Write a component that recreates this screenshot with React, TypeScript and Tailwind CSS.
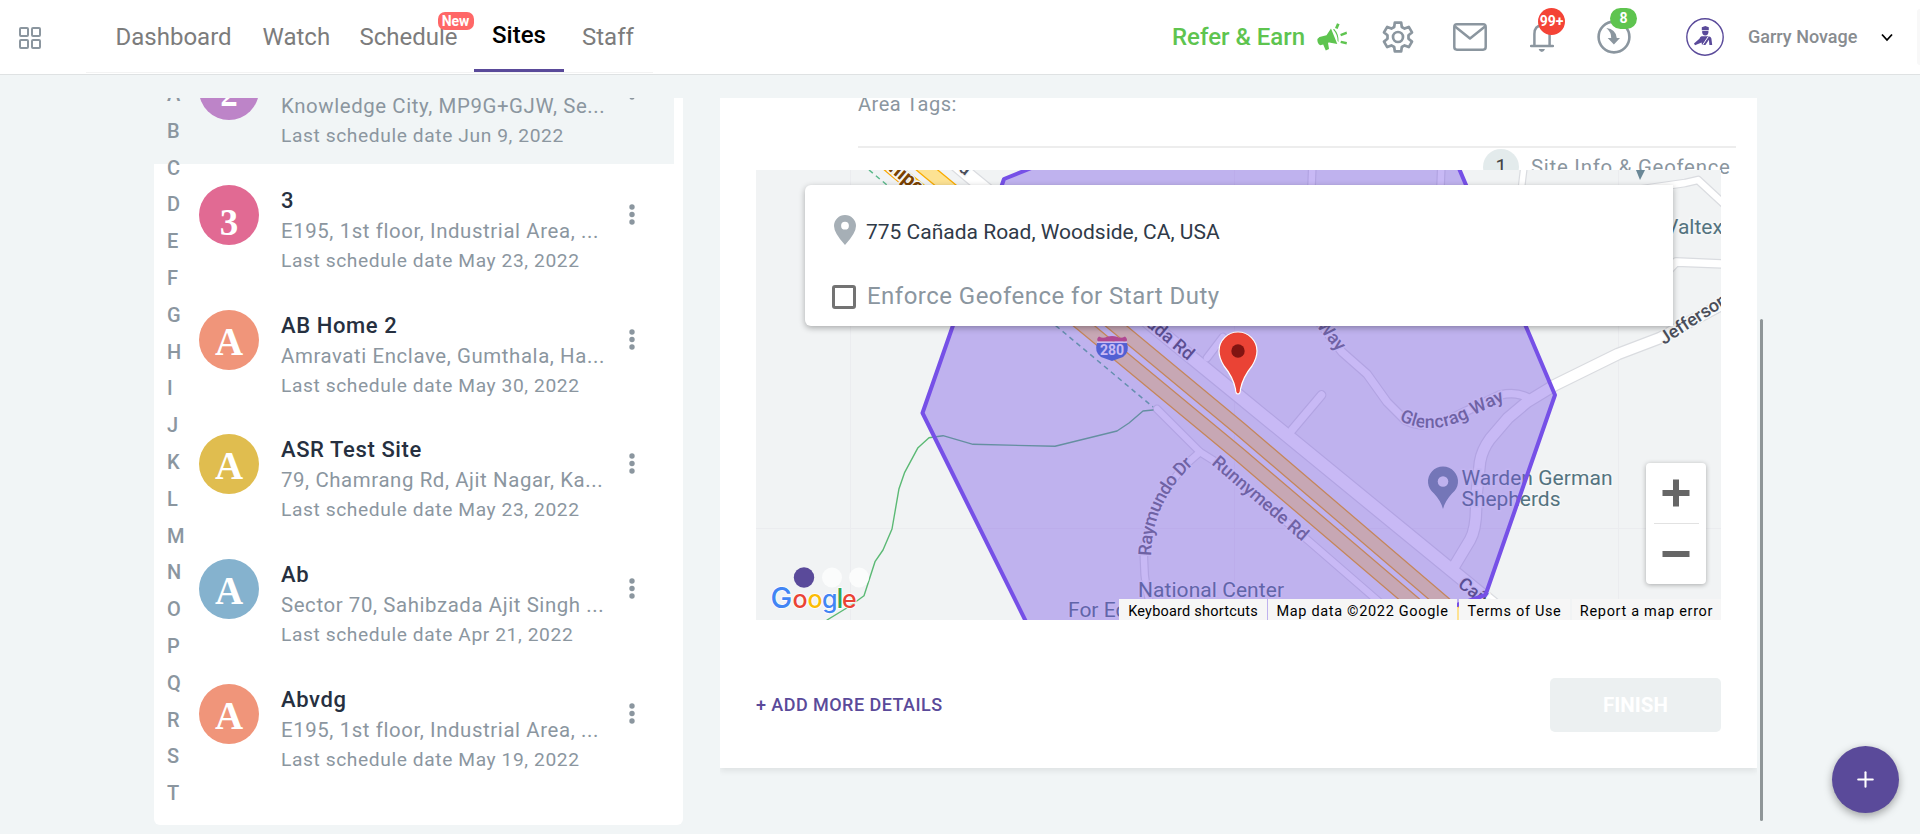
import { Plus } from "lucide-react";

const letters = "ABCDEFGHIJKLMNOPQRST".split("");

const sites = [
  { initial: "3", tone: "bg-[#e16a93]", name: "3", address: "E195, 1st floor, Industrial Area, ...", date: "May 23, 2022" },
  { initial: "A", tone: "bg-[#f0957a]", name: "AB Home 2", address: "Amravati Enclave, Gumthala, Ha...", date: "May 30, 2022" },
  { initial: "A", tone: "bg-[#e0bd4f]", name: "ASR Test Site", address: "79, Chamrang Rd, Ajit Nagar, Ka...", date: "May 23, 2022" },
  { initial: "A", tone: "bg-[#85b2ce]", name: "Ab", address: "Sector 70, Sahibzada Ajit Singh ...", date: "Apr 21, 2022" },
  { initial: "A", tone: "bg-[#f0957a]", name: "Abvdg", address: "E195, 1st floor, Industrial Area, ...", date: "May 19, 2022" },
];

const selected = { initial: "2", tone: "bg-[#bd84c8]", name: "2", address: "Knowledge City, MP9G+GJW, Se...", date: "Jun 9, 2022" };

const initialStyle: Record<string, string> = {
  A: "mt-[3px] text-[39px]",
  "2": "mt-[9px] text-[35px]",
  "3": "mt-[14px] text-[37px]",
};

const brand = [
  { glyph: "G", x: 770.5, size: 29, fill: "#4285f4" },
  { glyph: "o", x: 792.5, size: 25, fill: "#ea4335" },
  { glyph: "o", x: 807.5, size: 25, fill: "#fbbc05" },
  { glyph: "g", x: 822, size: 25, fill: "#4285f4" },
  { glyph: "l", x: 836.5, size: 27, fill: "#34a853" },
  { glyph: "e", x: 842, size: 25, fill: "#ea4335" },
];

function GridIcon() {
  return (
    <svg width="22" height="22" viewBox="0 0 22 22" fill="none" stroke="#8b969f" strokeWidth="2">
      <rect x="1" y="1" width="8" height="8" rx="1" />
      <rect x="13" y="1" width="8" height="8" rx="1" />
      <rect x="1" y="13" width="8" height="8" rx="1" />
      <rect x="13" y="13" width="8" height="8" rx="1" />
    </svg>
  );
}

function Megaphone() {
  return (
    <svg width="30" height="30" viewBox="0 0 30 30" fill="#5ec44f">
      <path d="M14 6.5 L20.3 22 L12.2 20.4 L11 20.8 L12 27 L8.8 28.5 L6.2 22.6 L3.2 23.2 Q0 21.5 0.4 17 L2.5 15 L9.5 13.2 Z" />
      <path d="M18 6 L20 1.2 L22.6 2.2 L20.6 7 Z M23.2 12 L29.5 9.6 L30 12 L24 14.3 Z M24 18.8 L30 20 L29.5 22.4 L23.4 21 Z" />
      <path d="M16 7.5 L17.2 7 Q22 12 21.5 20 L20.6 19 Q20.5 12 16 7.5 Z" />
    </svg>
  );
}

function Gear() {
  return (
    <svg width="32" height="32" viewBox="0 0 32 32" fill="none" stroke="#8b969f" strokeWidth="2.7" strokeLinejoin="round">
      <path d="M12.8 1.6 H19.2 L19.8 6 L22.6 7.6 L26.8 5.9 L30 11.4 L26.5 14.2 V17.8 L30 20.6 L26.8 26.1 L22.6 24.4 L19.8 26 L19.2 30.4 H12.8 L12.2 26 L9.4 24.4 L5.2 26.1 L2 20.6 L5.5 17.8 V14.2 L2 11.4 L5.2 5.9 L9.4 7.6 L12.2 6 Z" />
      <circle cx="16" cy="16" r="5" />
    </svg>
  );
}

function Mail() {
  return (
    <svg width="34" height="28" viewBox="0 0 34 28" fill="none" stroke="#8b969f" strokeWidth="2.5" strokeLinejoin="round">
      <rect x="1.3" y="1.3" width="31.4" height="25.4" rx="2.6" />
      <path d="M2 3.5 L17 15.5 L32 3.5" />
    </svg>
  );
}

function Bell() {
  return (
    <svg width="24" height="30" viewBox="0 0 24 30" fill="none">
      <path d="M4.4 24 V12 Q4.4 3.5 12 3.5 Q19.6 3.5 19.6 12 V24" stroke="#8b969f" strokeWidth="2.5" />
      <path d="M1 24 H23" stroke="#8b969f" strokeWidth="2.4" strokeLinecap="round" />
      <path d="M8.6 27 H15 Q14 30 11.8 30 Q9.6 30 8.6 27 Z" fill="#8b969f" />
    </svg>
  );
}

function ArrowCircle() {
  return (
    <svg width="34" height="34" viewBox="0 0 34 34" fill="none">
      <circle cx="17" cy="17" r="15.4" stroke="#8b969f" strokeWidth="2.6" />
      <path d="M9.3 8 Q19 9.3 19.8 18 H23 L16.9 24.6 L10.7 18 H14.2 Q14.3 12 9.3 8 Z" fill="#8b969f" />
    </svg>
  );
}

function Guard() {
  return (
    <svg width="38" height="38" viewBox="0 0 38 38" fill="#5a4a9a">
      <circle cx="19" cy="19" r="18.2" fill="#fff" stroke="#5a4a9a" strokeWidth="1.4" />
      <path d="M15.8 9.2 L19.3 8 L22.8 9.2 V12.2 H15.8 Z" />
      <path d="M16.2 13.1 H22.4 V14.5 Q22 17.4 19.3 17.4 Q16.6 17.4 16.2 14.5 Z" />
      <path d="M15.6 18.2 H22.6 Q25 18.4 25.4 20.6 L26.2 27 H23.4 L22.9 21.8 L19.4 27 H16 L15.6 24.4 L9 27.2 L8 25.6 L13.4 20.8 Q14.2 18.6 15.6 18.2 Z" />
      <path d="M22.4 18.4 L16.6 27" stroke="#fff" strokeWidth="1" />
    </svg>
  );
}

function Dots() {
  return (
    <svg width="6" height="21" viewBox="0 0 6 21" fill="#8b969f">
      <circle cx="3" cy="3" r="2.7" />
      <circle cx="3" cy="10.5" r="2.7" />
      <circle cx="3" cy="18" r="2.7" />
    </svg>
  );
}

function SiteRow({ site }: { site: (typeof sites)[number] }) {
  return (
    <div className="flex h-[124.7px] shrink-0 items-start pt-[21px]">
      <div
        className={`ml-[45px] flex h-[60px] w-[60px] shrink-0 items-center justify-center rounded-full font-['Liberation_Serif',serif] font-bold text-white ${site.tone}`}
      >
        <span className={`leading-none ${initialStyle[site.initial]}`}>{site.initial}</span>
      </div>
      <div className="ml-[22px] w-[341px] whitespace-nowrap tracking-[0.6px] text-[#8b969f]">
        <div className="-mt-px h-[31px] text-[22px] font-medium leading-[33px] text-[#263040]">{site.name}</div>
        <div className="h-[30px] text-[20.4px] leading-[33px]">{site.address}</div>
        <div className="h-[30px] text-[19.2px] leading-[32px]">Last schedule date {site.date}</div>
      </div>
      <div className="ml-[7px] mt-[19px]">
        <Dots />
      </div>
    </div>
  );
}

function Header() {
  return (
    <header className="flex h-[75px] shrink-0 items-start border-b border-[#dfe2e3] bg-white">
      <div className="ml-[19px] mt-[27px]">
        <GridIcon />
      </div>
      <nav className="ml-[45px] flex h-[73px] w-[567px] border-b border-[#f3f3f3] text-2xl leading-[74px] text-[#7c7c7c]">
        <span className="ml-[29.5px] w-[147px]">Dashboard</span>
        <span className="w-[97px]">Watch</span>
        <span className="relative w-[114px]">
          Schedule
          <span className="absolute left-[78px] top-3 h-[18px] w-9 rounded-[7px] bg-[#ff6767] text-center text-[14px] font-bold leading-[18px] text-white">
            New
          </span>
        </span>
        <span className="ml-[0.5px] h-[72px] w-[90px] border-b-[3px] border-[#5a4a9a] text-center font-medium leading-[70px] text-black">Sites</span>
        <span className="ml-[18px]">Staff</span>
      </nav>
      <div className="ml-[519px] text-2xl font-medium leading-[74px] text-[#5ec44f]">
        <div className="w-[145px] whitespace-nowrap">Refer &amp; Earn</div>
      </div>
      <div className="mt-[22px] w-[65px]">
        <Megaphone />
      </div>
      <div className="mt-[21px] w-[71px]">
        <Gear />
      </div>
      <div className="mt-[23px] w-[77px]">
        <Mail />
      </div>
      <div className="relative mt-[22px] w-[67px]">
        <Bell />
        <span className="absolute -top-[14px] left-2 flex h-[27px] w-[27px] items-center justify-center rounded-full bg-[#f44336] text-[14px] font-bold text-white">
          99+
        </span>
      </div>
      <div className="relative mt-5 w-[89px]">
        <ArrowCircle />
        <span className="absolute -top-3 left-[13px] flex h-[21px] w-[27px] items-center justify-center rounded-[11px] bg-[#5ec44f] text-[14px] font-bold text-white">
          8
        </span>
      </div>
      <div className="mt-[18px] w-[62px]">
        <Guard />
      </div>
      <div className="w-[133px] whitespace-nowrap text-[18px] font-medium leading-[74px] text-[#888c90]">Garry Novage</div>
      <svg className="mt-[33px]" width="12" height="9" viewBox="0 0 12 9" fill="none" stroke="#000" strokeWidth="1.8">
        <path d="M1 1.5 L6 7 L11 1.5" />
      </svg>
      <div className="ml-auto mt-[9px] h-14 w-[3px] rounded-l-[3px] bg-[#f8f8f8]" />
    </header>
  );
}

function MapCanvas() {
  const halo = { stroke: "#f5f7f8", strokeWidth: 3, paintOrder: "stroke" as const };
  const lanes = ["M880 130.5 L927 170 L1121 330 L1240 428.7 L1480 634", "M848 130 L895 170 L1089 330 L1240 455 L1450 634"];
  const minor = [
    ["M1157 409 L1200 452 L1216 462 L1310 542 L1400 620", 8],
    ["M1200 452 L1183 467 Q1142 520 1144 560 Q1144 590 1155 620", 8],
    ["M1207 358 L1223 337", 8],
    ["M1292 430 L1321.500 395", 9],
    ["M1313 150 L1311 200", 8],
    ["M1442 150 L1440 200", 8],
    ["M1526 150 L1520 200", 7],
    ["M1316 318 L1342 352 L1367 374 L1387 402 L1405 420 Q1425 430 1450 419 L1500 395 Q1518 391 1530 399", 9],
    ["M1636 190 L1685 183 L1698 180 L1724 204", 8],
    ["M1655 285 L1676 262 L1724 264", 9],
  ] as [string, number][];
  const major = [
    ["M940 151 L972 178 L1240 397 L1510 618", 14],
    ["M1455 565 L1470 540 Q1477 528 1476 500 L1480 462 Q1482 450 1490 439 L1508 418 L1527 402 L1555 385 L1618 354 L1660 338 L1730 300", 12],
  ] as [string, number][];
  return (
    <svg className="block" width="965" height="450" viewBox="756 170 965 450" fontFamily="Roboto, sans-serif">
      <defs>
        <path id="glencrag" d="M1399 420 Q1430 437 1468 418 Q1490 407 1520 394" />
        <path id="raymundo" d="M1151 556 Q1152 500 1196 462" />
      </defs>
      <rect x="756" y="170" width="965" height="450" fill="#f1f3f4" />
      <path d="M850.500 170 V620 M1234.500 170 V620 M1618.500 170 V620 M756 528.500 H1721" stroke="#ebecef" />
      <g fill="none" strokeLinejoin="round" strokeLinecap="round">
        {[...minor, ...major].map(([d, w]) => (
          <path key={d} d={d} stroke="#dadce0" strokeWidth={w + 0.8} />
        ))}
        {[...minor, ...major].map(([d, w]) => (
          <path key={d} d={d} stroke="#fff" strokeWidth={w - 1.6} />
        ))}
        {lanes.map((d) => (
          <g key={d}>
            <path d={d} stroke="#f9ab00" strokeWidth="15" />
            <path d={d} stroke="#fde293" strokeWidth="12.4" />
          </g>
        ))}
        <path d="M869 170 L887 185 L1061 330 L1153 407" stroke="#5bb98b" strokeWidth="1.5" strokeDasharray="5 4" strokeLinecap="butt" />
        <path
          d="M1153 410 L1143 411 L1129 423 L1117 431 L1055 446.300 L973 444.300 L943 435.700 L929 437.700 L918 447.700 L904.700 472.300 L899 488.700 L892 529 L883 550 L875 561.700 L864 595.700 L850 606 L827 620"
          stroke="#5bb974"
          strokeWidth="1.4"
        />
      </g>
      <g fontWeight="500" fontSize="18" fill="#4a4e5a" {...halo}>
        <text transform="translate(888 170) rotate(40)" fontSize="20" fontWeight="700" fill="#7a4100">nipe</text>
        <text transform="translate(958 170) rotate(39)">a</text>
        <text transform="translate(1188 361) rotate(40)" textAnchor="end">Cañada Rd</text>
        <text transform="translate(1338 352) rotate(50)" textAnchor="end" fill="#6b6f78">Way</text>
        <text transform="translate(1457 586) rotate(38)">Cañada Rd</text>
        <text fill="#6b6f78"><textPath href="#glencrag" textLength="113">Glencrag Way</textPath></text>
        <text fill="#6b6f78"><textPath href="#raymundo" textLength="104">Raymundo Dr</textPath></text>
        <text transform="translate(1211 464) rotate(40.500)" textLength="120" fill="#6b6f78">Runnymede Rd</text>
        <text transform="translate(1664 345) rotate(-33)" fontSize="18">Jefferson Ave</text>
      </g>
      <g fontSize="21" fill="#54737f" {...halo}>
        <text x="1665" y="234">Valtex</text>
        <text x="1461.500" y="485" textLength="151">Warden German</text>
        <text x="1461.500" y="506" textLength="99">Shepherds</text>
        <text x="1138" y="597" textLength="146">National Center</text>
        <text x="1068" y="617">For Education</text>
      </g>
      <path d="M1636 170 H1645 L1640 180 Z" fill="#6a8796" />
      <path d="M1443 509 Q1441 501 1434 493.500 A15 15 0 1 1 1452 493.500 Q1445 501 1443 509 Z" fill="#738f99" />
      <circle cx="1443" cy="481.500" r="5.300" fill="#f1f3f4" />
      <path d="M1097 343 Q1094 352 1101 357 L1112 361 L1123 357 Q1130 352 1127 343 Z" fill="#3a6bc6" />
      <path d="M1098 341.500 Q1096 339 1099 336.500 Q1103 339 1107 336.800 Q1112 335 1117 336.800 Q1121 339 1125 336.500 Q1128 339 1126.500 341.500 Z" fill="#d8435b" />
      <path d="M1097 342.300 H1127" stroke="#fff" strokeWidth="1.500" />
      <text x="1112" y="355" fontSize="14" fontWeight="700" fill="#fff" textAnchor="middle">280</text>
      <path
        d="M1004 179 L1200 100 L1430 100 L1555 395 L1485.500 595 L1300 660 L1045 660 L922.500 413 Z"
        fill="#7650e7"
        fillOpacity="0.4"
        stroke="#7650e7"
        strokeWidth="4"
        strokeLinejoin="round"
      />
      <path
        d="M1238 394 Q1235.500 394 1235.500 389 Q1233 377 1224 366 Q1219 358 1219 351 A19 19 0 0 1 1257 351 Q1257 358 1252 366 Q1243 377 1240.500 389 Q1240.500 394 1238 394 Z"
        fill="#ea4335"
        stroke="#fff"
        strokeWidth="1.200"
      />
      <circle cx="1238" cy="351" r="6.700" fill="#811411" />
      <g fill="#fbfcfc">
        <circle cx="832" cy="577.500" r="10" />
        <circle cx="859" cy="577.500" r="10" />
      </g>
      <circle cx="804" cy="577.500" r="10.200" fill="#5a4a9a" />
      <text y="607.500" fontFamily="Inter, sans-serif" fontWeight="500" stroke="#fff" strokeWidth="1.500" paintOrder="stroke">
        {brand.map((part) => (
          <tspan key={part.x} x={part.x} fontSize={part.size} fill={part.fill}>
            {part.glyph}
          </tspan>
        ))}
      </text>
    </svg>
  );
}

function MapPanel() {
  return (
    <div className="relative ml-9 h-[450px] w-[965px] overflow-hidden">
      <MapCanvas />
      <div className="absolute left-[49px] top-[15px] h-[141px] w-[868px] rounded-l-md bg-white shadow-[0_2px_6px_rgba(0,0,0,0.3)]">
        <div className="flex h-[54px] items-end pl-[29px]">
          <svg className="mb-[-6px]" width="22" height="30" viewBox="0 0 22 30" fill="#a6afb6">
            <path fillRule="evenodd" d="M11 0 A11 11 0 0 1 22 11 Q22 18 11 30 Q0 18 0 11 A11 11 0 0 1 11 0 Z M11 6.800 A3.900 3.900 0 1 0 11 14.600 A3.900 3.900 0 1 0 11 6.800 Z" />
          </svg>
          <span className="mb-[-7px] ml-[10px] text-[21px] leading-[28px] text-[#2f3a48]">775 Cañada Road, Woodside, CA, USA</span>
        </div>
        <div className="mt-[43px] flex h-[30px] items-center pl-[27px]">
          <span className="mt-[-1px] h-6 w-6 rounded-[3px] border-[3px] border-[#737373]" />
          <span className="-mt-0.5 ml-[11px] text-2xl leading-[28px] tracking-[0.47px] text-[#8b969f]">Enforce Geofence for Start Duty</span>
        </div>
      </div>
      <div className="absolute left-[890px] top-[293px] flex h-[121px] w-[60px] flex-col items-center rounded-sm bg-white shadow-[0_1px_5px_rgba(0,0,0,0.3)]">
        <svg width="60" height="121" viewBox="0 0 60 121" fill="#666">
          <path d="M16.500 27 H27 V16.500 H33 V27 H43.500 V33 H33 V43.500 H27 V33 H16.500 Z M16.500 88 H43.500 V94 H16.500 Z" />
          <path d="M8 60 H53 V61 H8 Z" fill="#e2e2e2" />
        </svg>
      </div>
      <div className="absolute bottom-0 right-0 flex h-[21px] whitespace-nowrap text-[14.5px] leading-[25px] tracking-[0.68px] text-black">
        <span className="w-[148px] bg-[#f6f6f6] text-center tracking-[0.22px]">Keyboard shortcuts</span>
        <span className="ml-px w-[189px] bg-[#f6f6f6] text-center">Map data ©2022 Google</span>
        <span className="ml-0.5 w-[111px] bg-[#f6f6f6] text-center">Terms of Use</span>
        <span className="ml-0.5 w-[149px] bg-[#f6f6f6] text-center">Report a map error</span>
      </div>
    </div>
  );
}

export default function App() {
  return (
    <div className="flex h-[834px] w-[1920px] flex-col overflow-hidden bg-[#f1f5f6] font-[Roboto,sans-serif]">
      <Header />
      <main className="mt-[23px] flex flex-1 items-start">
        <section className="relative ml-[154px] h-[727px] w-[529px] overflow-hidden rounded-b-[6px] bg-white">
          <div className="h-[66px] w-[520px] overflow-hidden bg-[#f1f5f6]">
            <div className="-mt-[59px]">
              <SiteRow site={selected} />
            </div>
          </div>
          {sites.map((site) => (
            <SiteRow key={site.name} site={site} />
          ))}
          <ul className="absolute left-[13px] top-[-23px] text-[20px] font-medium text-[#8b969f]">
            {letters.map((letter) => (
              <li key={letter} className="h-[36.8px] leading-[38px]">
                {letter}
              </li>
            ))}
          </ul>
        </section>
        <section className="ml-[37px] h-[686px] w-[1037px] overflow-hidden">
          <div className="h-[670px] bg-white shadow-[0_3px_6px_rgba(0,0,0,0.08)]">
            <div className="ml-[138px] flex h-[50px] w-[878px] items-start border-b-2 border-[#ededed] text-[20px] tracking-[0.5px] text-[#8b969f]">
              <span className="-mt-2 leading-[28px]">Area Tags:</span>
            </div>
            <div className="flex h-[22px] items-start pl-[763px] pt-px">
              <span className="flex h-9 w-9 shrink-0 items-center justify-center rounded-full bg-[#e3ebec] text-[20px] text-[#444]">1</span>
              <span className="ml-3 mt-1 whitespace-nowrap text-[20.4px] leading-[28px] tracking-[0.75px] text-[#8b969f]">Site Info &amp; Geofence</span>
            </div>
            <MapPanel />
            <div className="ml-9 mt-[58px] flex h-[54px] w-[965px] items-center justify-between">
              <span className="-mt-0.5 text-[18px] font-medium tracking-[0.45px] text-[#5a4a9a]">+ ADD MORE DETAILS</span>
              <span className="flex h-[54px] w-[171px] items-center justify-center rounded-[5px] bg-[#ecf0f1] text-[20.5px] font-bold text-white">FINISH</span>
            </div>
          </div>
        </section>
        <div className="ml-[3px] mt-[221px] h-[502px] w-[3px] rounded bg-[#8f9698]" />
        <button className="ml-[69px] mt-[648px] flex h-[67px] w-[67px] items-center justify-center rounded-full bg-[#5a4a9a] text-white shadow-[0_3px_8px_rgba(0,0,0,0.35)]">
          <Plus size={25} strokeWidth={2} />
        </button>
      </main>
    </div>
  );
}
